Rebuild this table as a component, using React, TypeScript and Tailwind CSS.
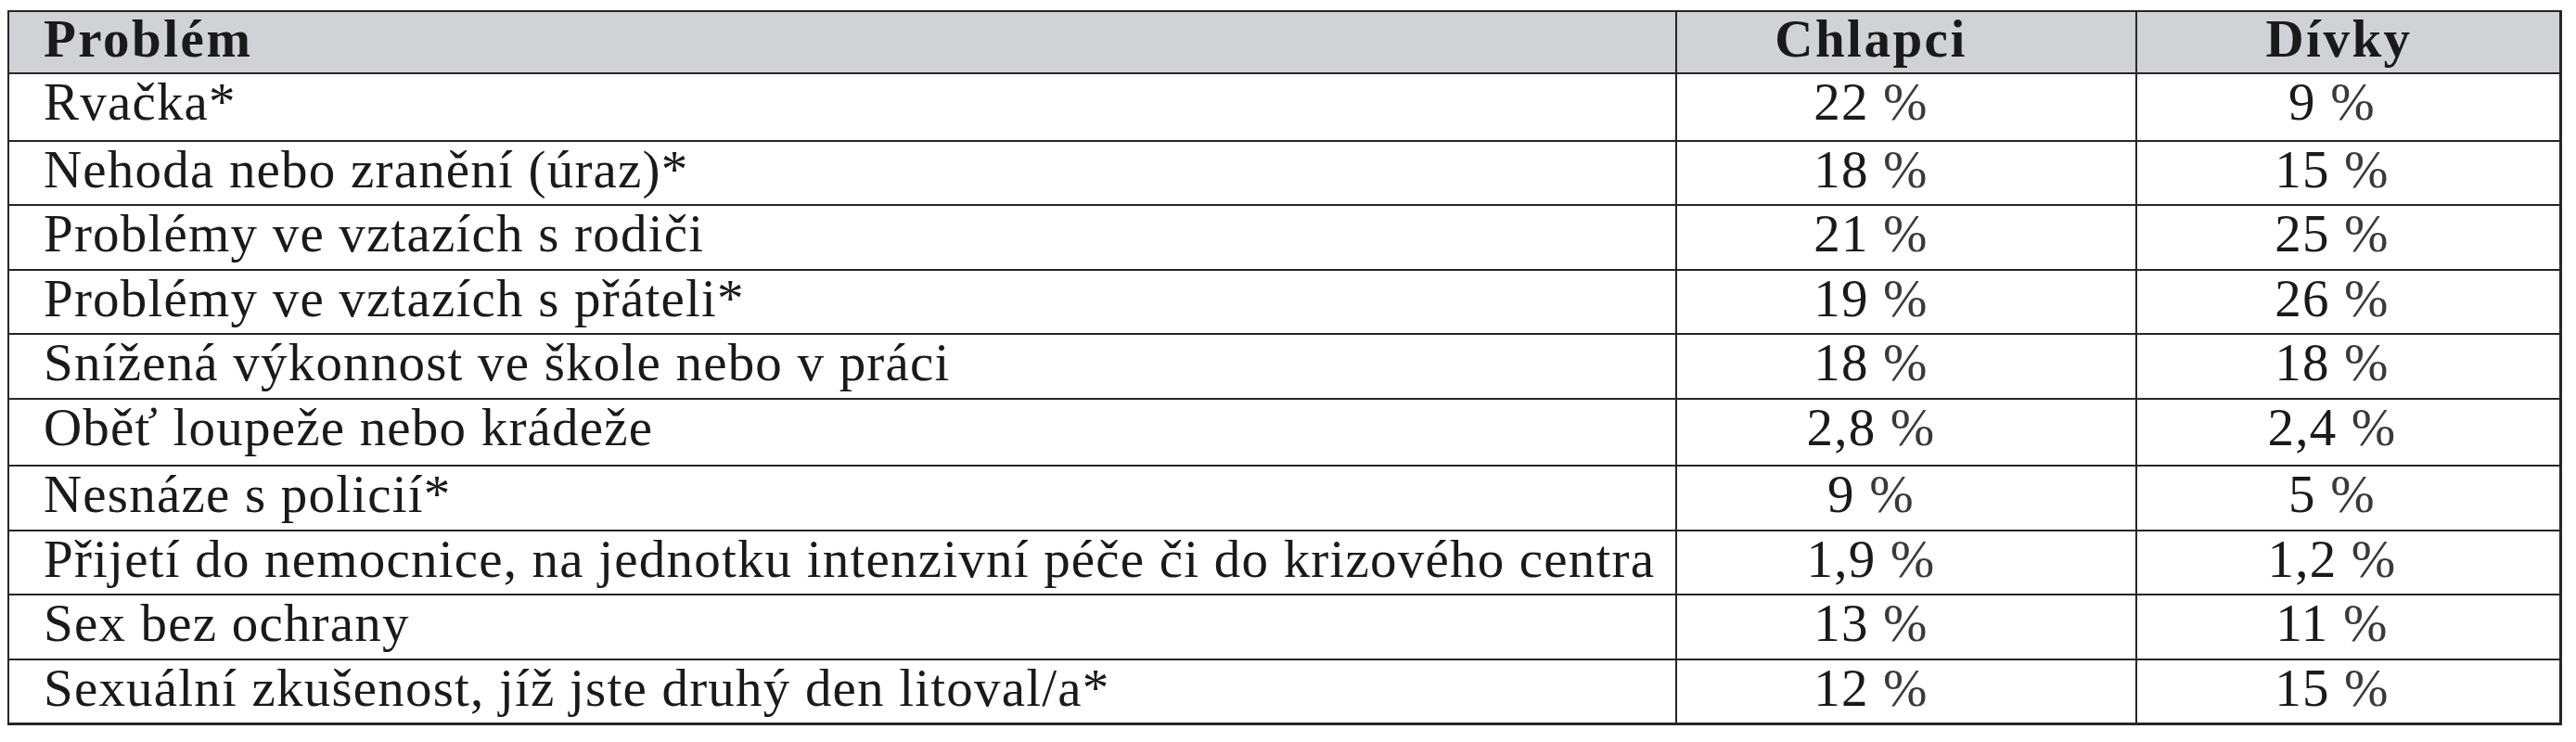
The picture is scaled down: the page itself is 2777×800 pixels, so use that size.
import React from "react";

type Row = { label: string; boys: string; girls: string; h: string };

const rows: Row[] = [
  { label: "Rvačka*", boys: "22", girls: "9", h: "h-[73px]" },
  { label: "Nehoda nebo zranění (úraz)*", boys: "18", girls: "15", h: "h-[69px]" },
  { label: "Problémy ve vztazích s rodiči", boys: "21", girls: "25", h: "h-[70px]" },
  { label: "Problémy ve vztazích s přáteli*", boys: "19", girls: "26", h: "h-[69px]" },
  { label: "Snížená výkonnost ve škole nebo v práci", boys: "18", girls: "18", h: "h-[70px]" },
  { label: "Oběť loupeže nebo krádeže", boys: "2,8", girls: "2,4", h: "h-[72px]" },
  { label: "Nesnáze s policií*", boys: "9", girls: "5", h: "h-[70px]" },
  {
    label: "Přijetí do nemocnice, na jednotku intenzivní péče či do krizového centra",
    boys: "1,9",
    girls: "1,2",
    h: "h-[69px]",
  },
  { label: "Sex bez ochrany", boys: "13", girls: "11", h: "h-[70px]" },
  { label: "Sexuální zkušenost, jíž jste druhý den litoval/a*", boys: "12", girls: "15", h: "h-[67px]" },
];

function Pct({ v }: { v: string }) {
  return (
    <span className="whitespace-nowrap">
      {v} <span className="text-[#3a3a3a]">%</span>
    </span>
  );
}

export default function App() {
  return (
    <div className="min-h-[800px] w-[2777px] bg-white pl-[8px] pt-[11px] font-['Liberation_Serif',serif] text-[57px] leading-[57px] text-[#1a1a1a]">
      <div className="w-[2754px] border-2 border-r-[3px] border-b-[3px] border-[#262626]">
        {/* header */}
        <div className="grid h-[67px] grid-cols-[1796px_496px_457px] border-b-2 border-[#262626] bg-[#d1d2d5] font-bold tracking-[2.5px]">
          <div className="flex items-start pl-[37px] pt-0">Problém</div>
          <div className="flex items-start justify-center border-l-2 border-[#262626] pr-[76px] pt-0">Chlapci</div>
          <div className="flex items-start justify-center border-l-2 border-[#262626] pr-[20px] pt-0">Dívky</div>
        </div>
        {rows.map((r, i) => (
          <div
            key={r.label}
            className={`grid grid-cols-[1796px_496px_457px] tracking-[1.2px] ${r.h} ${
              i < rows.length - 1 ? "border-b-2 border-[#262626]" : ""
            }`}
          >
            <div className="flex items-start whitespace-nowrap pl-[37px] pt-[1px]">{r.label}</div>
            <div className="flex items-start justify-center border-l-2 border-[#262626] pr-[76px] pt-[1px]">
              <Pct v={r.boys} />
            </div>
            <div className="flex items-start justify-center border-l-2 border-[#262626] pr-[35px] pt-[1px]">
              <Pct v={r.girls} />
            </div>
          </div>
        ))}
      </div>
    </div>
  );
}
